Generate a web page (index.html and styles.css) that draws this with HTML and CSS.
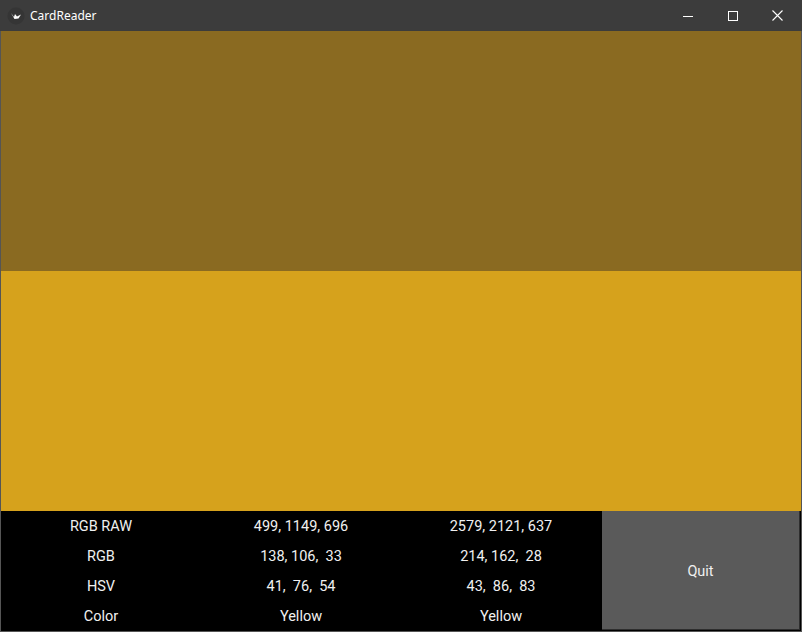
FILE: index.html
```html
<!DOCTYPE html>
<html>
<head>
<meta charset="utf-8">
<link rel="stylesheet" href="styles.css">
</head>
<body>
<div class="window">
  <div class="titlebar">
    <div class="title-left">
      <svg class="app-icon" width="18" height="18" viewBox="0 0 18 18">
        <circle cx="9" cy="9" r="8.5" fill="#353535"/>
        <path d="M4 6 L7 10 L8 7 L10 9.5 L14 7.5 L11.5 11.5 L7.5 12 Z" fill="#ffffff"/>
      </svg>
      <span class="title">CardReader</span>
    </div>
    <div class="controls">
      <div class="ctl"><svg width="10" height="10" viewBox="0 0 10 10"><path d="M0 5.5 H10" stroke="#fff" stroke-width="1"/></svg></div>
      <div class="ctl"><svg width="10" height="10" viewBox="0 0 10 10"><rect x="0.5" y="0.5" width="9" height="9" fill="none" stroke="#fff" stroke-width="1"/></svg></div>
      <div class="ctl"><svg width="11" height="11" viewBox="0 0 11 11"><path d="M0.5 0.5 L10.5 10.5 M10.5 0.5 L0.5 10.5" stroke="#fff" stroke-width="1.1"/></svg></div>
    </div>
  </div>
  <div class="content">
    <div class="swatch swatch-raw"></div>
    <div class="swatch swatch-ref"></div>
    <div class="table">
      <div class="cells">
        <div class="cell">RGB RAW</div>
        <div class="cell">499, 1149, 696</div>
        <div class="cell">2579, 2121, 637</div>
        <div class="cell">RGB</div>
        <div class="cell">138, 106,&nbsp; 33</div>
        <div class="cell">214, 162,&nbsp; 28</div>
        <div class="cell">HSV</div>
        <div class="cell">41,&nbsp; 76,&nbsp; 54</div>
        <div class="cell">43,&nbsp; 86,&nbsp; 83</div>
        <div class="cell">Color</div>
        <div class="cell">Yellow</div>
        <div class="cell">Yellow</div>
      </div>
      <div class="quit-wrap"><button class="quit">Quit</button></div>
    </div>
  </div>
</div>
</body>
</html>
```
FILE: styles.css
```css
html, body {
  margin: 0;
  padding: 0;
  background: #3c3c3c;
}
.window {
  width: 802px;
  height: 632px;
  display: flex;
  flex-direction: column;
  background: #555555;
}
.titlebar {
  height: 31px;
  background: #3c3c3c;
  display: flex;
  justify-content: space-between;
  align-items: stretch;
  flex: none;
}
.title-left {
  display: flex;
  align-items: center;
  padding-left: 7px;
  gap: 5px;
}
.app-icon {
  display: block;
}
.title {
  color: #ffffff;
  font-family: "Noto Sans", "Open Sans", sans-serif;
  font-size: 12px;
}
.controls {
  display: flex;
  padding-right: 2px;
}
.ctl {
  width: 45px;
  display: flex;
  align-items: center;
  justify-content: center;
}
.ctl svg {
  display: block;
}
.content {
  margin: 0 1px 1px 1px;
  height: 600px;
  display: flex;
  flex-direction: column;
  background: #000;
}
.swatch {
  height: 240px;
  flex: none;
}
.swatch-raw {
  background: #8a6a21;
}
.swatch-ref {
  background: #d6a21c;
}
.table {
  height: 120px;
  display: flex;
  background: #000;
}
.cells {
  width: 600px;
  display: grid;
  grid-template-columns: 200px 200px 200px;
  grid-auto-rows: 30px;
}
.cell {
  color: #f0f0f0;
  font-family: Roboto, sans-serif;
  font-size: 14.5px;
  display: flex;
  align-items: center;
  justify-content: center;
}
.quit-wrap {
  width: 200px;
  padding: 0 1px 1px 1px;
  box-sizing: border-box;
  display: flex;
}
.quit {
  flex: 1;
  margin: 0;
  border: none;
  border-right: 1px solid #2e2e2e;
  border-bottom: 1px solid #2e2e2e;
  background: #5a5a5a;
  color: #f0f0f0;
  font-family: Roboto, sans-serif;
  font-size: 14.5px;
  padding: 2px 0 0 0;
}
```
